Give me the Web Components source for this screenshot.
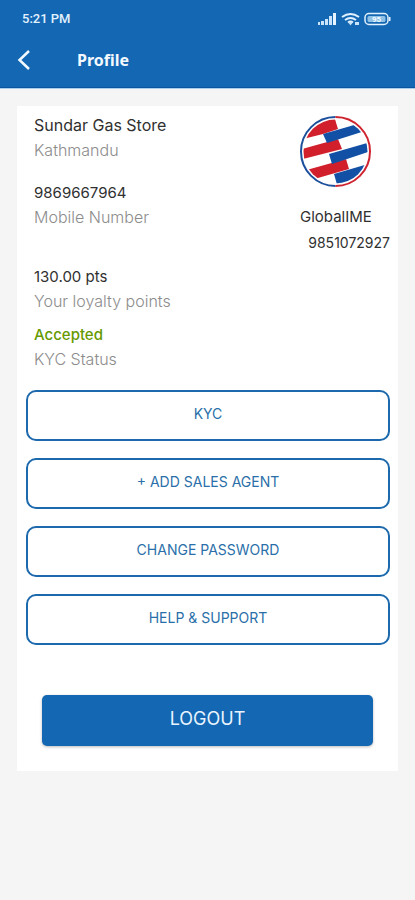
<!DOCTYPE html>
<html lang="en">
<head>
<meta charset="utf-8">
<meta name="viewport" content="width=device-width, initial-scale=1">
<title>Profile</title>
<style>
  body { margin: 0; min-height: 100vh; background: #f5f5f5; font-family: Inter, "Open Sans", sans-serif; --brand: #1467b2; }
</style>
</head>
<body>
<profile-page></profile-page>
<script>
const define = (name, html) => {
  const template = document.createElement('template');
  template.innerHTML = html;
  customElements.define(name, class extends HTMLElement {
    constructor() {
      super();
      this.attachShadow({ mode: 'open' }).append(template.content.cloneNode(true));
    }
  });
};

define('status-bar', `
<style>
  :host { display: flex; align-items: center; justify-content: space-between; height: 38px; padding: 0 24px 0 22px; color: #e2f1ff; font: 500 13px/16px Roboto, sans-serif; }
  svg { display: block; }
</style>
<slot></slot>
<svg width="74" height="14" viewBox="0 0 74 14" role="img" aria-label="Signal, wireless and battery">
  <g fill="#c9e4fb">
    <rect x="1" y="10" width="2" height="3"/><rect x="4" y="9" width="3" height="4"/>
    <rect x="8" y="7" width="3" height="6"/><rect x="12" y="4" width="3" height="9"/>
    <rect x="16" y="1" width="3" height="12" fill="#e6f4ff"/>
  </g>
  <g fill="none" stroke="#e2f1ff" stroke-width="2">
    <path d="M25 5Q33.500-1 42 5M28 8Q33.500 4 39 8"/>
    <path d="M31 10.500Q33.500 8.700 36 10.500" />
  </g>
  <path d="M31 10h5l-2.500 3.500zM38 10h4v3h-4z" fill="#c9e4fb"/>
  <rect x="48" y="1.500" width="23" height="11" rx="4" fill="none" stroke="#e2f1ff" stroke-width="1.500"/>
  <rect x="50.500" y="4" width="18" height="6" rx="1.500" fill="#8fc0e6"/>
  <path d="M72 5h1.500v4H72z" fill="#e2f1ff"/>
  <text x="59.500" y="10" text-anchor="middle" font-family="Roboto, sans-serif" font-size="8" font-weight="700" fill="#f2faff">95</text>
</svg>`);

define('title-bar', `
<style>
  :host { display: flex; align-items: center; gap: 40px; height: 50px; padding: 0 12px 5px 13px; color: #f2f9ff; border-bottom: 1px solid #0a559d; box-sizing: border-box; }
  button { display: grid; place-items: center; width: 24px; height: 32px; padding: 0; border: 0; background: none; color: inherit; }
  h1 { margin: 0; font: 700 16px/24px "Noto Sans", sans-serif; }
</style>
<button type="button" aria-label="Back">
  <svg width="24" height="24" viewBox="0 0 24 24" fill="none" stroke="currentColor" stroke-width="2.500"><path d="M16 3L6.500 12L16 21"/></svg>
</button>
<h1><slot></slot></h1>`);

define('info-pair', `
<style>
  :host { display: block; font-size: 15px; line-height: 25px; color: #303030; }
  ::slotted(*), slot { display: block; }
  .label { color: #8c8c8c; font-size: 16px; font-weight: 300; }
</style>
<slot></slot>
<div class="label"><slot name="label"></slot></div>`);

define('bank-logo', `
<style>:host { display: block; } svg { display: block; }</style>
<svg width="72" height="72" viewBox="0 0 72 72" role="img" aria-label="GlobalIME logo">
  <defs><clipPath id="disc"><circle cx="36.500" cy="35.500" r="32"/></clipPath></defs>
  <circle cx="36.500" cy="35.500" r="34.500" fill="#fff"/>
  <g clip-path="url(#disc)">
    <g fill="#d1202c">
      <path d="M0 0H35L39 13L24 18L0 24Z"/>
      <path d="M0 34L39 23L43 33L0 44Z"/>
      <path d="M0 56L47 43L50 53L12 64Z"/>
    </g>
    <g fill="#1250a5">
      <path d="M24 18L72 4V13L28 27Z"/>
      <path d="M30 38L72 26V35L33 48Z"/>
      <path d="M35 58L72 47V72H39Z"/>
    </g>
  </g>
  <path d="M36.500 1A34.500 34.500 0 0 0 36.500 70" fill="none" stroke="#1c4f9c" stroke-width="2"/>
  <path d="M36.500 1A34.500 34.500 0 0 1 36.500 70" fill="none" stroke="#cf2430" stroke-width="2"/>
</svg>`);

define('outline-button', `
<style>
  :host { display: block; }
  button { display: block; width: 100%; height: 51px; padding: 0 0 3px; border: 2px solid #1c69ad; border-radius: 10px; background: #fff; color: #2a6fa9; font: 400 14px/20px Inter, sans-serif; }
</style>
<button type="button"><slot></slot></button>`);

define('solid-button', `
<style>
  :host { display: block; }
  button { display: block; width: 100%; height: 51px; padding: 0 0 4px; border: 0; border-radius: 5px; background: var(--brand); color: #e8f4ff; font: 400 18px/24px Inter, sans-serif; box-shadow: 0 1px 3px #0004; }
</style>
<button type="button"><slot></slot></button>`);

define('profile-card', `
<style>
  :host { display: block; margin: 17px 17px 0; padding: 7px 8px 25px 9px; background: #fff; }
  .summary { display: flex; justify-content: space-between; padding-left: 8px; }
  .facts { display: flex; flex-direction: column; }
  .facts .second { margin-top: 17px; }
  .facts .third { margin-top: 34px; }
  .facts .fourth { margin-top: 8px; }
  .store { font-size: 16px; }
  .status { color: #669900; font-weight: 500; }
  .bank { display: flex; flex-direction: column; width: 90px; padding-top: 3px; font-size: 15px; line-height: 26px; color: #303030; }
  .bank bank-logo { margin: 0 0 16px -1px; }
  .number { text-align: right; font-size: 14px; }
  .actions { display: grid; gap: 17px; margin-top: 18px; }
  .exit { margin: 50px 17px 0 16px; }
</style>
<div class="summary">
  <div class="facts">
    <info-pair><span class="store">Sundar Gas Store</span><span slot="label">Kathmandu</span></info-pair>
    <info-pair class="second">9869667964<span slot="label">Mobile Number</span></info-pair>
    <info-pair class="third">130.00 pts<span slot="label">Your loyalty points</span></info-pair>
    <info-pair class="fourth"><span class="status">Accepted</span><span slot="label">KYC Status</span></info-pair>
  </div>
  <div class="bank">
    <bank-logo></bank-logo>
    <div>GlobalIME</div>
    <div class="number">9851072927</div>
  </div>
</div>
<div class="actions">
  <outline-button>KYC</outline-button>
  <outline-button>+ ADD SALES AGENT</outline-button>
  <outline-button>CHANGE PASSWORD</outline-button>
  <outline-button>HELP &amp; SUPPORT</outline-button>
</div>
<solid-button class="exit">LOGOUT</solid-button>`);

define('profile-page', `
<style>
  :host { display: block; }
  header { background: var(--brand); border-bottom: 1px solid #a9cdea; }
</style>
<header>
  <status-bar>5:21 PM</status-bar>
  <title-bar>Profile</title-bar>
</header>
<main><profile-card></profile-card></main>`);
</script>
</body>
</html>
